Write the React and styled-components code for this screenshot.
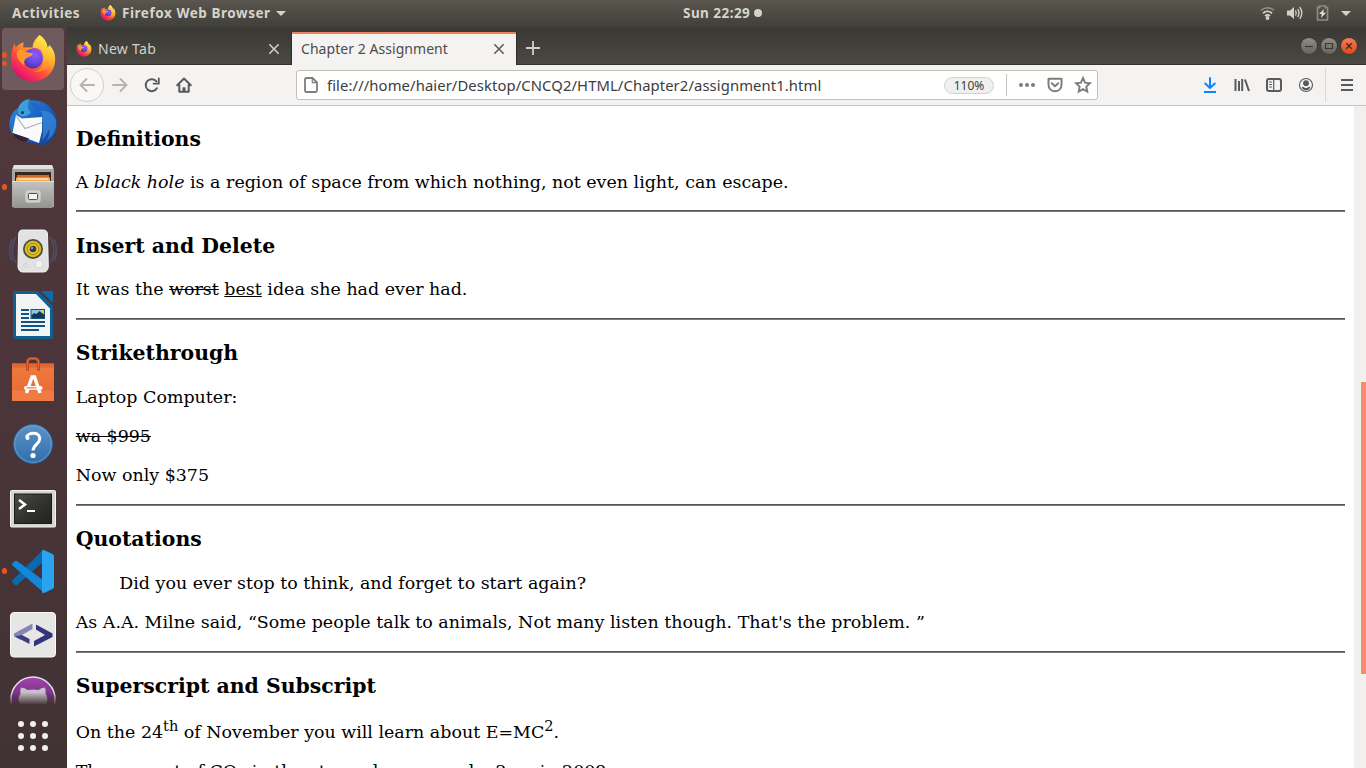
import React from "react";
import styled, { createGlobalStyle } from "styled-components";

const GlobalStyle = createGlobalStyle`
  * { box-sizing: border-box; }
  body { margin: 0; overflow: hidden; background: #fff; }
  svg { display: block; flex: none; overflow: visible; }
`;

const ui = `"Noto Sans", "Open Sans", sans-serif`;

const Desktop = styled.div`
  width: 1366px;
  height: 768px;
  display: flex;
  flex-direction: column;
  overflow: hidden;
  font-family: ${ui};
`;

/* ---------- top panel ---------- */
const TopPanel = styled.header`
  height: 27px;
  flex: none;
  display: flex;
  align-items: center;
  padding: 0 15px 1px 0;
  background: linear-gradient(#5a564e, #403f3a);
  color: #d6d3cb;
  font-size: 13.5px;
  font-weight: 700;
`;
const PanelLeft = styled.div`
  width: 683px;
  padding-left: 12px;
  display: flex;
  align-items: center;
`;
const Label = styled.span`
  flex: none;
  white-space: nowrap;
  line-height: 20px;
  width: ${(p) => p.$w}px;
  letter-spacing: ${(p) => p.$ls || 0}px;
`;
const AppMenu = styled.div`
  display: flex;
  align-items: center;
  margin-left: 20px;
  gap: 6px;
`;
const ClockDot = styled.span`
  width: 8px;
  height: 8px;
  border-radius: 50%;
  background: #d5d2ca;
`;
const Tray = styled.div`
  margin-left: auto;
  display: flex;
  align-items: center;
  gap: 12px;
`;

const Workspace = styled.div`
  flex: 1;
  display: flex;
  min-height: 0;
`;

/* ---------- dock ---------- */
const Dock = styled.nav`
  width: 67px;
  flex: none;
  display: flex;
  flex-direction: column;
  background: linear-gradient(#51383c, #4b353a 50%, #413234);
`;
const DockSlot = styled.div`
  width: 66px;
  height: ${(p) => p.$h || 64}px;
  flex: none;
  display: flex;
  justify-content: center;
  align-items: flex-start;
  padding-top: ${(p) => (p.$active ? 0 : 8)}px;
  overflow: ${(p) => (p.$h ? "hidden" : "visible")};
  position: relative;
`;
const DockTile = styled.div`
  width: 62px;
  height: 62px;
  margin-top: 1px;
  border-radius: 4px;
  background: #6f5b5e;
  display: flex;
  justify-content: center;
  padding-top: 7px;
`;
const RunningDots = styled.div`
  position: absolute;
  left: 2px;
  top: 0;
  height: 64px;
  display: flex;
  flex-direction: column;
  justify-content: center;
  gap: 3px;
  i {
    width: 5.4px;
    height: 5.4px;
    border-radius: 50%;
    background: #e95420;
  }
`;
const AppsGrid = styled.div`
  width: 66px;
  flex: 1;
  display: grid;
  grid-template-columns: repeat(3, 6px);
  grid-auto-rows: 6px;
  gap: 6px;
  place-content: center;
  i {
    border-radius: 50%;
    background: #f2f0ef;
  }
`;

/* ---------- browser ---------- */
const Browser = styled.section`
  flex: 1;
  display: flex;
  flex-direction: column;
  min-width: 0;
`;
const TabStrip = styled.div`
  height: 38px;
  flex: none;
  display: flex;
  align-items: flex-end;
  background: linear-gradient(#393834, #4a4943);
  border-bottom: 1px solid #33322e;
`;
const Tab = styled.div`
  width: ${(p) => p.$w}px;
  height: 33px;
  display: flex;
  align-items: center;
  font-size: 14px;
  padding: ${(p) => (p.$active ? "0 12px 2px 9px" : "0 13px 0 9px")};
  justify-content: space-between;
  color: ${(p) => (p.$active ? "#4c4c4c" : "#d3d0c8")};
  background: ${(p) => (p.$active ? "#f4f3f2" : "transparent")};
  border-top: 2px solid ${(p) => (p.$active ? "#f0825a" : "transparent")};
  box-shadow: ${(p) => (p.$active ? "-1px 0 #2e2d29, 1px 0 #2e2d29" : "none")};
  margin-bottom: ${(p) => (p.$active ? -1 : 0)}px;
`;
const TabTitle = styled.div`
  display: flex;
  align-items: center;
  gap: 6px;
`;
const NewTab = styled.div`
  height: 33px;
  display: flex;
  align-items: center;
  padding-left: 10px;
`;
const WindowControls = styled.div`
  margin-left: auto;
  height: 38px;
  padding: 2px 9px 0 0;
  display: flex;
  align-items: center;
  gap: 4px;
`;
const Control = styled.span`
  width: 16px;
  height: 16px;
  border-radius: 50%;
  background: ${(p) => (p.$close ? "linear-gradient(#f37d55, #de4a16)" : "linear-gradient(#8f8d84, #65635b)")};
  box-shadow: 0 0 0 0.5px #2e2d29;
`;
const Toolbar = styled.div`
  height: 41px;
  flex: none;
  display: flex;
  align-items: center;
  background: #f4f3f2;
  border-bottom: 1px solid #c6c4c1;
`;
const ToolButton = styled.div`
  width: ${(p) => p.$w || 32}px;
  display: flex;
  justify-content: center;
`;
const BackButton = styled.div`
  width: 34px;
  height: 34px;
  margin-left: 3px;
  border: 1px solid #d2d0cd;
  border-radius: 50%;
  background: #f9f8f7;
  display: flex;
  align-items: center;
  justify-content: center;
`;
const UrlBar = styled.div`
  width: 802px;
  height: 30px;
  margin-left: 96px;
  padding-left: 7px;
  display: flex;
  align-items: center;
  border: 1px solid #c5bfba;
  border-radius: 3px;
  background: #fff;
  font-size: 14.8px;
  color: #3c3c3c;
`;
const Address = styled(Label)`
  margin-left: 9px;
`;
const ZoomBadge = styled.div`
  width: 50px;
  height: 17px;
  margin-left: auto;
  border: 1px solid #d0d0d0;
  border-radius: 9px;
  background: #f0f0f0;
  font-size: 12px;
  line-height: 15px;
  text-align: center;
`;
const Divider = styled.span`
  width: 1px;
  height: ${(p) => p.$h}px;
  margin-left: ${(p) => p.$ml}px;
  background: ${(p) => p.$c};
`;
const UrlIcons = styled.div`
  display: flex;
  align-items: center;
  width: 90px;
  padding: 0 6px 0 12px;
  justify-content: space-between;
`;
const ToolbarEnd = styled.div`
  margin-left: auto;
  display: flex;
  align-items: center;
`;

/* ---------- page ---------- */
const Viewport = styled.div`
  flex: 1;
  min-height: 0;
  display: flex;
  background: #fff;
`;
const Page = styled.main`
  flex: 1;
  overflow: hidden;
  padding: 20.8px 9px 0 8.73px;
  font-family: "DejaVu Serif", serif;
  font-size: 17.46px;
  line-height: 21.82px;
  color: #000;
  white-space: nowrap;
`;
const Heading = styled.h3`
  margin: 21.51px 0 20.42px;
  font-size: 20.42px;
  line-height: 25.2px;
  &:first-child { margin: 0 0 20px; }
`;
const Para = styled.p`
  margin: 0 0 17.45px;
  padding-top: ${(p) => (p.$raised ? 2.4 : 0)}px;
  sup, sub { font-size: 14.54px; line-height: 0; }
`;
const Quote = styled.blockquote`
  margin: 0 43.6px 17.45px;
`;
const Rule = styled.hr`
  margin: -0.9px 0 0;
  height: 2px;
  border: 0;
  border-top: 1px solid #555;
  background: #7c7c7c;
`;
const ScrollTrack = styled.div`
  width: 12px;
  background: #f1f0ef;
  padding: 276px 0 0 7px;
`;
const ScrollThumb = styled.div`
  height: 292px;
  background: #f28e6c;
`;

/* ---------- icons ---------- */
const Firefox = ({ size = 48, id }) => (
  <svg width={size} height={size} viewBox="0 0 48 48">
    <defs>
      <linearGradient id={id + "a"} x1="0.85" y1="0.1" x2="0.25" y2="0.95">
        <stop offset="0" stopColor="#fff44f" />
        <stop offset="0.35" stopColor="#ffa92e" />
        <stop offset="0.62" stopColor="#ff5634" />
        <stop offset="1" stopColor="#e60a78" />
      </linearGradient>
      <linearGradient id={id + "b"} x1="0.6" y1="0" x2="0.4" y2="1">
        <stop offset="0" stopColor="#fff14e" />
        <stop offset="0.5" stopColor="#ffc135" />
        <stop offset="1" stopColor="#ff7a2c" />
      </linearGradient>
      <radialGradient id={id + "c"} cx="0.6" cy="0.3" r="0.8">
        <stop offset="0" stopColor="#9059ff" />
        <stop offset="0.5" stopColor="#6a4be0" />
        <stop offset="1" stopColor="#482aa0" />
      </radialGradient>
    </defs>
    <path d="M6 8c-.2 2 .2 3 .8 4.500C9 9.500 12 8 15 7.500c-1 2-1 3.500-.5 5h9L30.500 0C36 4 38 8 38.500 13l2-3c4 4 5.800 9 5.700 14.500C45.700 37 36.500 46.500 24 46.500S2 37 2 24.500C2 17.500 3.500 12 6 8z" fill={`url(#${id}a)`} />
    <path d="M30.500 0c-4.500 4-7 8-6.800 12.500 8 2 11.800 7.500 10.800 14-1 6-5.500 9.500-10.500 10.500 9 1 17-4 19-12C44.500 17 38.500 12 38.500 12 38 8 36 4 30.500 0z" fill={`url(#${id}b)`} opacity="0.85" />
    <circle cx="24" cy="23.500" r="10" fill={`url(#${id}c)`} />
    <path d="M8 16c3-2 6-1.500 8.500.5 2 1.500 4 1.500 7 1.500.5 2-1 3-5 4.500-2.500 1-4 3.500-3 8C10 27 7 22 8 16z" fill="#ff9a2a" />
    <path d="M23 13c6-1 10 2 11 7-2-3-5-4-8-4z" fill="#b23bd0" opacity="0.7" />
  </svg>
);

const Thunderbird = () => (
  <svg width="48" height="48" viewBox="0 0 48 48">
    <defs>
      <linearGradient id="tb" x1="0" y1="0" x2="1" y2="1">
        <stop offset="0" stopColor="#2f8fdc" />
        <stop offset="0.5" stopColor="#1c60bd" />
        <stop offset="1" stopColor="#133a94" />
      </linearGradient>
    </defs>
    <path d="M17 2.500C27-1 40 4 44 12c3 4 4 8 4 13 0 11-6 19-16 22.500l-3-3C14 44 3 38 1 30-1 22 2 13 9 9z" fill="url(#tb)" />
    <path d="M21 0C13 1 8.500 6 9 14l3 3c4 1 8-1 10-4C18 10 18 4 21 0z" fill="#3b9fdc" />
    <path d="M21 4c11 0 21 6 25 17-5-5-9-8-16-8z" fill="#1f66c6" />
    <path d="M33 18c1-3 0-5-2-6 8-1 13 3 16 9 1 10-3 17-10 21 3-4 4-8 3-12-2 5-4 9-7 11 2-8 1-14 0-23z" fill="#3589d6" opacity=".75" />
    <path d="M7 16l6 3.500 20-1.500v14l-3 12L3.500 34z" fill="#fafafa" />
    <path d="M7.500 17.500L16 29.500l17-6" fill="none" stroke="#aeb2ba" strokeWidth="1.200" />
    <path d="M3.500 34L20 39.500l-3 3.500C10 42 6 39 3.500 34z" fill="#3a2036" />
    <circle cx="13.500" cy="13.500" r="1.500" fill="#342c40" />
  </svg>
);

const Files = () => (
  <svg width="48" height="48" viewBox="0 0 48 48">
    <defs>
      <linearGradient id="fl" x1="0" y1="0" x2="0" y2="1">
        <stop offset="0" stopColor="#c2c2c1" /><stop offset="1" stopColor="#949392" />
      </linearGradient>
    </defs>
    <path d="M5 2h38l2 5v37H3V7z" fill="#a6a5a4" />
    <path d="M5 2h38l1.500 4h-41z" fill="#e2e2e1" />
    <rect x="6" y="9" width="36" height="10" fill="#352720" />
    <path d="M8 12h32v3H8z" fill="#cf6a26" />
    <path d="M7 14.500h34V19H7z" fill="#f5ad57" />
    <path d="M9 15.500h30v1H9z" fill="#fff1d8" />
    <path d="M3 18.500h42L43.500 45h-39z" fill="url(#fl)" />
    <path d="M3 18.500h42" stroke="#dededd" />
    <rect x="17" y="28" width="14" height="11" rx="1.500" fill="#c8c8c7" stroke="#deddde" />
    <rect x="19.500" y="30.500" width="9" height="6" rx="1" fill="#f4f4f4" stroke="#4f4f4f" />
  </svg>
);

const Rhythmbox = () => (
  <svg width="48" height="48" viewBox="0 0 48 48">
    <g fill="none" stroke="#54628b" strokeWidth="1.500" opacity=".55">
      <path d="M7 10C2 17 2 29 7 36M3 12c-3 7-3 15 0 22M41 10c5 7 5 19 0 26M45 12c3 7 3 15 0 22" />
    </g>
    <path d="M14 3h20c3 0 4 1 4.500 4l.8 32c0 4-2 6-5 6H14c-3 0-5-2-5-6l.7-32c.3-3 1.500-4 4.300-4z" fill="#e2e2e2" stroke="#f3f3f3" />
    <circle cx="24" cy="22" r="10" fill="#4a4a45" />
    <circle cx="24" cy="22" r="8.300" fill="#d8bb16" />
    <circle cx="24" cy="22" r="5.500" fill="#eacb3d" stroke="#9d8512" />
    <circle cx="24" cy="22" r="3.300" fill="#3b3a43" />
    <circle cx="23" cy="21" r="1.200" fill="#9b9bb0" />
    <circle cx="30" cy="37" r="3.800" fill="#f2f2f2" stroke="#c4c4c4" strokeWidth=".5" />
    <circle cx="16.500" cy="38.500" r="2" fill="none" stroke="#cfcfcf" />
  </svg>
);

const Writer = () => (
  <svg width="48" height="48" viewBox="0 0 48 48">
    <path d="M6 0h24l14 14v32q0 2-2 2H6q-2 0-2-2V2q0-2 2-2z" fill="#115e91" />
    <path d="M29 0l15 15V12L32 0z" fill="#4b353a" />
    <path d="M32 0h12v12z" fill="#0b6cab" />
    <path d="M7 3h20L41 17.500V45H7z" fill="#f2f3f3" />
    <path d="M12 19h8M12 23h8M12 27h8M12 31h24M12 35h24M12 39h18" stroke="#0e5484" strokeWidth="1.900" />
    <rect x="22" y="18.500" width="13.500" height="9" fill="#8ac7e4" stroke="#0e5484" />
    <path d="M22.500 27v-3l3-2 2 1 3-3 5 4v3z" fill="#17384b" />
    <circle cx="33.500" cy="20.500" r="1.400" fill="#f1cf39" />
  </svg>
);

const Software = () => (
  <svg width="48" height="48" viewBox="0 0 48 48">
    <defs>
      <linearGradient id="sw" x1="0" y1="0" x2="0" y2="1">
        <stop offset="0" stopColor="#ee7a42" /><stop offset="1" stopColor="#e9692f" />
      </linearGradient>
    </defs>
    <g transform="translate(0 1.500)">
      <path d="M3 7h42v37.500H3z" fill="url(#sw)" />
      <path d="M3 34h42v10.500H3z" fill="#f48550" opacity=".6" />
      <path d="M3 7h42v4H3z" fill="#d95f28" opacity=".65" />
      <path d="M18.500 14V6q0-4 4-4h3q4 0 4 4v8" fill="none" stroke="#bd441b" strokeWidth="3" />
      <path d="M18.500 13V6q0-4 4-4h3q4 0 4 4v7" fill="none" stroke="#e8683a" strokeWidth="1.200" />
      <path d="M17.500 36.500L23 20.500h2.500l5.500 16" fill="none" stroke="#fff" strokeWidth="3.400" />
      <rect x="15" y="29.500" width="18.500" height="3.800" rx="1.900" fill="#fff" />
      <path d="M17.500 31.400h10" stroke="#e8622c" strokeWidth="1" />
    </g>
  </svg>
);

const Help = () => (
  <svg width="48" height="48" viewBox="0 0 48 48">
    <defs>
      <linearGradient id="hp" x1="0" y1="0" x2="0" y2="1">
        <stop offset="0" stopColor="#5b93c8" /><stop offset="1" stopColor="#316ea8" />
      </linearGradient>
    </defs>
    <circle cx="24" cy="25.500" r="20" fill="#32272c" opacity=".5" />
    <circle cx="24" cy="25" r="19.500" fill="url(#hp)" stroke="#2f6397" />
    <circle cx="24" cy="25" r="18.300" fill="none" stroke="#8ab3d9" strokeWidth=".8" opacity=".7" />
    <path d="M17.500 18.500C18 13.500 31 12 30.800 19.500c0 5.500-6.300 5.500-6.800 12" fill="none" stroke="#fff" strokeWidth="3" />
    <circle cx="18.500" cy="19" r="2" fill="#fff" />
    <circle cx="24" cy="36.500" r="2.600" fill="#fff" />
  </svg>
);

const Terminal = () => (
  <svg width="48" height="48" viewBox="0 0 48 48">
    <defs>
      <linearGradient id="tm" x1="0" y1="0" x2="1" y2="1">
        <stop offset="0" stopColor="#4c4d4a" /><stop offset=".5" stopColor="#333432" /><stop offset="1" stopColor="#20211f" />
      </linearGradient>
    </defs>
    <rect x="1.500" y="7.500" width="45" height="36.500" rx="1" fill="#d5d5d3" stroke="#f2f2f1" />
    <rect x="5.500" y="11" width="37" height="29.500" fill="url(#tm)" stroke="#191a18" />
    <path d="M10 17l6 4.500-6 4.500" fill="none" stroke="#fff" strokeWidth="2.500" />
    <path d="M18 28h8" stroke="#fff" strokeWidth="2" />
  </svg>
);

const VSCode = () => (
  <svg width="48" height="48" viewBox="0 0 48 48">
    <path d="M34 3v12L8 38q-1 .6-2 0l-2.500-2.500q-1-1.200 0-2.200z" fill="#0c69ae" />
    <path d="M34 45V33L8 14q-1-.6-2 0l-2.500 2.200q-1 1.200 0 2.200z" fill="#1288d8" />
    <path d="M33 3.500q1.200-.8 2.500-.2L43.500 7q1.500.8 1.500 2.500v30q0 1.700-1.500 2.500l-8 3.700q-1.300.5-2.500-.2z" fill="#28a4f0" />
  </svg>
);

const CodeTile = () => (
  <svg width="48" height="48" viewBox="0 0 48 48">
    <rect x="1.500" y="1.500" width="45" height="44.500" rx="3.500" fill="#e6e6e5" stroke="#fbfbfb" />
    <path d="M23.500 12.500L5 22.500v3L12 29v-4.500l11.500-6.500z" fill="#8585b5" />
    <path d="M6 25.500l7-1.500 7.500 4V33z" fill="#3c3c80" />
    <path d="M27 13.500l16.500 9v3.500L25 35.500V30l11-6-9-5.500z" fill="#34347c" />
  </svg>
);

const GitHubDesktop = () => (
  <svg width="48" height="48" viewBox="0 0 48 48">
    <defs>
      <linearGradient id="gh" x1="0" y1="0" x2="0" y2="1">
        <stop offset="0" stopColor="#a443ae" /><stop offset=".6" stopColor="#642a74" />
      </linearGradient>
      <linearGradient id="gf" x1="0" y1="0" x2="0" y2="1">
        <stop offset="0.3" stopColor="#413234" stopOpacity="0" /><stop offset="1" stopColor="#413234" />
      </linearGradient>
    </defs>
    <circle cx="24" cy="24" r="22" fill="url(#gh)" stroke="#e3dfe2" strokeWidth="1.500" />
    <path d="M12 12.500q4 0 6.500 2.500 5.500-1.200 11 0 2.500-2.500 6.500-2.500 1 3 .5 6 3.500 5 .5 11H11q-3-6 .5-11-.5-3 .5-6z" fill="#c9bfca" />
    <path d="M0 12h48v18H0z" fill="url(#gf)" />
  </svg>
);

const Close = ({ color, size = 10 }) => (
  <svg width={size} height={size} viewBox="0 0 10 10" stroke={color} strokeWidth="1.600" strokeLinecap="round">
    <path d="M.8.8l8.400 8.400M9.200.8L.8 9.200" />
  </svg>
);
const Caret = () => (
  <svg width="10" height="5" viewBox="0 0 10 5"><path d="M0 0h10L5 5z" fill="#d5d2ca" /></svg>
);
const Line = ({ children, color = "#5a5a5a", w = 16, sw = 2 }) => (
  <svg width={w} height="16" viewBox={`0 0 ${w} 16`} fill="none" stroke={color} strokeWidth={sw} strokeLinecap="round" strokeLinejoin="round">
    {children}
  </svg>
);

const dockItems = [
  { icon: <Firefox id="dock" />, active: true, dots: 2 },
  { icon: <Thunderbird /> },
  { icon: <Files />, dots: 1 },
  { icon: <Rhythmbox /> },
  { icon: <Writer /> },
  { icon: <Software /> },
  { icon: <Help /> },
  { icon: <Terminal /> },
  { icon: <VSCode />, dots: 1 },
  { icon: <CodeTile /> },
  { icon: <GitHubDesktop />, h: 37 },
];

export default function App() {
  return (
    <Desktop>
      <GlobalStyle />
      <TopPanel>
        <PanelLeft>
          <Label $w={68} $ls={0.55}>Activities</Label>
          <AppMenu>
            <Firefox id="panel" size={16} />
            <Label $w={148} $ls={0.55}>Firefox Web Browser</Label>
            <Caret />
          </AppMenu>
        </PanelLeft>
        <Label $w={71} $ls={0.45}>Sun 22:29</Label>
        <ClockDot />
        <Tray>
          <svg width="15" height="13" viewBox="0 0 15 13" fill="none" stroke="#d5d2ca" strokeWidth="1.700">
            <path d="M1 3.500C4.500 0 10.500 0 14 3.500" stroke="#8d8a82" />
            <path d="M3 6.300c2.700-2.700 6.300-2.700 9 0M5 9c1.500-1.500 3.500-1.500 5 0" />
            <circle cx="7.500" cy="11" r="1.900" fill="#d5d2ca" stroke="none" />
          </svg>
          <svg width="16" height="14" viewBox="0 0 16 14" fill="none" stroke="#d5d2ca" strokeWidth="1.400">
            <path d="M0 4.500h3L7 1v12L3 9.500H0z" fill="#d5d2ca" stroke="none" />
            <path d="M8.500 4.500q1.500 2.500 0 5M10.700 3q2.500 4 0 8M12.800 1.200q4 5.800 0 11.600" />
          </svg>
          <svg width="14" height="16" viewBox="-0.500 0 14 16" fill="none" stroke="#8f8c84" strokeWidth="1.700">
            <path d="M2 2.700h2V1h6v1.700h2V15H2z" />
            <path d="M8.500 4L3.500 9h2.800L5.500 13l5-5.300H7.800z" fill="#e3e0d9" stroke="none" />
          </svg>
          <Caret />
        </Tray>
      </TopPanel>
      <Workspace>
        <Dock>
          {dockItems.map((d, i) => (
            <DockSlot key={i} $active={d.active} $h={d.h}>
              {d.dots && <RunningDots>{Array.from({ length: d.dots }, (_, n) => <i key={n} />)}</RunningDots>}
              {d.active ? <DockTile>{d.icon}</DockTile> : d.icon}
            </DockSlot>
          ))}
          <AppsGrid>{Array.from({ length: 9 }, (_, n) => <i key={n} />)}</AppsGrid>
        </Dock>
        <Browser>
          <TabStrip>
            <Tab $w={225}>
              <TabTitle>
                <Firefox id="tab" size={16} />
                <Label $w={59} $ls={0.3}>New Tab</Label>
              </TabTitle>
              <Close color="#d3d0c8" />
            </Tab>
            <Tab $w={224} $active>
              <Label $w={149} $ls={0.05}>Chapter 2 Assignment</Label>
              <Close color="#5c5c5c" />
            </Tab>
            <NewTab>
              <svg width="14" height="14" viewBox="0 0 14 14" stroke="#d3d0c8" strokeWidth="1.800"><path d="M7 0v14M0 7h14" /></svg>
            </NewTab>
            <WindowControls>
              <Control><svg width="16" height="16" stroke="#3a3934" strokeWidth="1.200"><path d="M4 8.500h8" /></svg></Control>
              <Control><svg width="16" height="16" fill="none" stroke="#3a3934" strokeWidth="1.200"><path d="M4.500 5.500h7v5h-7z" /></svg></Control>
              <Control $close><svg width="16" height="16" stroke="#3a2a20" strokeWidth="1.300"><path d="M5.300 5.300l5.400 5.400M10.700 5.300l-5.400 5.400" /></svg></Control>
            </WindowControls>
          </TabStrip>
          <Toolbar>
            <BackButton><Line color="#b5b4b2"><path d="M15 8H1.500M7.500 2L1.500 8l6 6" /></Line></BackButton>
            <ToolButton><Line color="#b5b4b2"><path d="M1 8h13.500M8.500 2l6 6-6 6" /></Line></ToolButton>
            <ToolButton>
              <Line><path d="M12.900 11.200A6 6 0 1 1 12.500 4.500" /><path d="M14.800 1.500v5.200H9.600" strokeWidth="1.800" strokeLinejoin="miter" /></Line>
            </ToolButton>
            <ToolButton>
              <Line><path d="M1.200 8.200L8 1.500l6.800 6.700M3.300 8v6.800h9.400V8" /><path d="M8 14.500v-4.200" strokeWidth="3" strokeLinecap="butt" /></Line>
            </ToolButton>
            <UrlBar>
              <Line w={14} color="#7d7d7d"><path d="M3 1h5.500L13 5.500V13.500Q13 15 11.500 15h-9Q1 15 1 13.500v-11Q1 1 2.500 1z" strokeWidth="1.800" /><path d="M8.300 1v4.700H13" strokeWidth="1.200" /></Line>
              <Address $w={496} $ls={0.1}>file:///home/haier/Desktop/CNCQ2/HTML/Chapter2/assignment1.html</Address>
              <ZoomBadge>110%</ZoomBadge>
              <Divider $h={22} $c="#c4c4c4" $ml={12} />
              <UrlIcons>
                <svg width="16" height="16" fill="#7d7d7d"><circle cx="2" cy="8" r="2" /><circle cx="8" cy="8" r="2" /><circle cx="14" cy="8" r="2" /></svg>
                <Line color="#7d7d7d"><path d="M1.500 1.800h13v5.700c0 9-13 9-13 0z" /><path d="M4.800 6.300L8 9.300l3.200-3" /></Line>
                <Line color="#7d7d7d" sw={1.900}><path d="M8 1l2.100 4.600 4.900.6-3.600 3.400.9 5L8 12.100l-4.300 2.500.9-5L1 6.200l4.900-.6z" strokeLinejoin="miter" /></Line>
              </UrlIcons>
            </UrlBar>
            <ToolbarEnd>
              <ToolButton>
                <Line w={12} color="#0a84ff"><path d="M6 1v10M1.200 6.500L6 11l4.800-4.500" /><path d="M0 15h12" strokeLinecap="butt" /></Line>
              </ToolButton>
              <ToolButton>
                <Line><path d="M1.500 2v12M5 4v10M8.200 2v12" strokeLinecap="butt" /><path d="M11 2.500L15 14" strokeLinecap="butt" /></Line>
              </ToolButton>
              <ToolButton>
                <Line><rect x="1" y="2" width="14" height="12" rx="2" /><path d="M7.700 2v12" strokeWidth="1.200" /><path d="M3.500 5h2M3.500 7.500h2M3.500 10h2" strokeWidth="1" /></Line>
              </ToolButton>
              <ToolButton>
                <svg width="16" height="16" viewBox="0 0 16 16"><circle cx="8" cy="8" r="6.500" fill="none" stroke="#5a5a5a" strokeWidth="1.100" /><circle cx="8" cy="6.200" r="2.900" fill="#5a5a5a" /><path d="M3.600 9.700q2.200.2 2.600.8 1.800 1 3.600 0 .4-.6 2.600-.8-.6 3.400-4.400 3.500-3.800-.1-4.400-3.500z" fill="#5a5a5a" /></svg>
              </ToolButton>
              <Divider $h={34} $c="#d9d7d4" $ml={3} />
              <ToolButton $w={40}>
                <Line w={12}><path d="M1 3h12M1 8h12M1 13h12" strokeLinecap="butt" /></Line>
              </ToolButton>
            </ToolbarEnd>
          </Toolbar>
          <Viewport>
            <Page>
              <Heading>Definitions</Heading>
              <Para>A <i>black hole</i> is a region of space from which nothing, not even light, can escape.</Para>
              <Rule />
              <Heading>Insert and Delete</Heading>
              <Para>It was the <del>worst</del> <ins>best</ins> idea she had ever had.</Para>
              <Rule />
              <Heading>Strikethrough</Heading>
              <Para>Laptop Computer:</Para>
              <Para><s>wa $995</s></Para>
              <Para>Now only $375</Para>
              <Rule />
              <Heading>Quotations</Heading>
              <Quote>Did you ever stop to think, and forget to start again?</Quote>
              <Para>As A.A. Milne said, <q>Some people talk to animals, Not many listen though. That's the problem. </q></Para>
              <Rule />
              <Heading>Superscript and Subscript</Heading>
              <Para $raised>On the 24<sup>th</sup> of November you will learn about E=MC<sup>2</sup>.</Para>
              <Para>The amount of CO<sub>2</sub> in the atmosphere grew by 2pm in 2009.</Para>
            </Page>
            <ScrollTrack><ScrollThumb /></ScrollTrack>
          </Viewport>
        </Browser>
      </Workspace>
    </Desktop>
  );
}
